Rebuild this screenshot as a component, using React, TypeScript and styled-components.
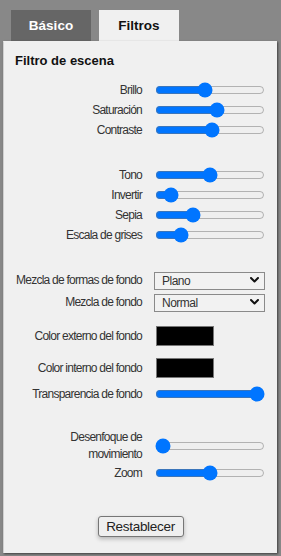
import React from "react";
import styled, { createGlobalStyle } from "styled-components";

const GlobalStyle = createGlobalStyle`
  html, body {
    margin: 0;
    padding: 0;
    background: #888888;
  }
  body {
    font-family: "Liberation Sans", Arial, sans-serif;
  }
`;

type SliderRow = { label: string; value: number };

const luzRows: SliderRow[] = [
  { label: "Brillo", value: 45 },
  { label: "Saturación", value: 57 },
  { label: "Contraste", value: 52 },
];

const tonoRows: SliderRow[] = [
  { label: "Tono", value: 50 },
  { label: "Invertir", value: 9 },
  { label: "Sepia", value: 32 },
  { label: "Escala de grises", value: 19 },
];

const Chevron = () => (
  <svg width="9" height="6" viewBox="0 0 9 6">
    <path
      d="M1 1 L4.5 4.5 L8 1"
      fill="none"
      stroke="#111"
      strokeWidth="2"
      strokeLinecap="round"
      strokeLinejoin="round"
    />
  </svg>
);

const App = () => {
  return (
    <>
      <GlobalStyle />
      <Page>
        <Tabs>
          <Tab>Básico</Tab>
          <Tab $active>Filtros</Tab>
        </Tabs>
        <Panel>
          <Title>Filtro de escena</Title>

          <Group $top={11}>
            {luzRows.map((row) => (
              <Row key={row.label}>
                <Label>{row.label}</Label>
                <Range type="range" defaultValue={row.value} />
              </Row>
            ))}
          </Group>

          <Group $top={25}>
            {tonoRows.map((row) => (
              <Row key={row.label}>
                <Label>{row.label}</Label>
                <Range type="range" defaultValue={row.value} />
              </Row>
            ))}
          </Group>

          <Group $top={24}>
            <Row $height={22}>
              <Label>Mezcla de formas de fondo</Label>
              <SelectWrap>
                <Select defaultValue="plano">
                  <option value="plano">Plano</option>
                </Select>
                <Chevron />
              </SelectWrap>
            </Row>
            <Row $height={22}>
              <Label>Mezcla de fondo</Label>
              <SelectWrap>
                <Select defaultValue="normal">
                  <option value="normal">Normal</option>
                </Select>
                <Chevron />
              </SelectWrap>
            </Row>
          </Group>

          <Group $top={7}>
            <Row $height={32}>
              <Label>Color externo del fondo</Label>
              <Swatch />
            </Row>
            <Row $height={32}>
              <Label>Color interno del fondo</Label>
              <Swatch />
            </Row>
            <Row>
              <Label>Transparencia de fondo</Label>
              <Range type="range" defaultValue={100} />
            </Row>
          </Group>

          <Group $top={24}>
            <Row $height={35}>
              <Label>
                Desenfoque de
                <br />
                movimiento
              </Label>
              <Range type="range" defaultValue={0} />
            </Row>
            <Row>
              <Label>Zoom</Label>
              <Range type="range" defaultValue={50} />
            </Row>
          </Group>

          <Footer>
            <ResetButton>Restablecer</ResetButton>
          </Footer>
        </Panel>
      </Page>
    </>
  );
};

export default App;

const Page = styled.div`
  padding: 10px 4px 3px 3px;
  height: 556px;
  box-sizing: border-box;
  display: flex;
  flex-direction: column;
`;

const Tabs = styled.div`
  display: flex;
  gap: 8px;
  padding-left: 8px;
`;

const Tab = styled.div<{ $active?: boolean }>`
  width: 80px;
  height: 31px;
  display: flex;
  align-items: center;
  justify-content: center;
  font-size: 13.5px;
  font-weight: bold;
  color: ${(p) => (p.$active ? "#111" : "#fff")};
  background: ${(p) => (p.$active ? "#f0f0f0" : "#666666")};
`;

const Panel = styled.div`
  flex: 1;
  background: #f0f0f0;
  border-left: 1px solid #d0d0d0;
  border-top: 1px solid #f0f0f0;
  box-shadow: 1px 1px 2px rgba(0, 0, 0, 0.55);
  display: flex;
  flex-direction: column;
`;

const Title = styled.h1`
  margin: 0;
  padding: 11px 0 0 11px;
  font-size: 13px;
  font-weight: bold;
  color: #111;
  line-height: 16px;
`;

const Group = styled.div<{ $top: number }>`
  margin-top: ${(p) => p.$top}px;
  display: flex;
  flex-direction: column;
`;

const Row = styled.div<{ $height?: number }>`
  display: flex;
  align-items: center;
  gap: 13px;
  height: ${(p) => p.$height ?? 20}px;
`;

const Label = styled.div`
  width: 138px;
  flex-shrink: 0;
  text-align: right;
  white-space: nowrap;
  font-size: 12px;
  letter-spacing: -0.75px;
  line-height: 17px;
  color: #333;
`;

const Range = styled.input`
  width: 110px;
  margin: 0;
`;

const SelectWrap = styled.div`
  position: relative;
  width: 111px;
  height: 18px;
  margin-left: -1px;

  svg {
    position: absolute;
    right: 6px;
    top: 6px;
    pointer-events: none;
  }
`;

const Select = styled.select`
  appearance: none;
  width: 100%;
  height: 100%;
  margin: 0;
  padding: 0 0 0 7px;
  border: 1px solid #8a8a8a;
  border-radius: 0;
  background: #f2f2f2;
  font-family: "Liberation Sans", Arial, sans-serif;
  font-size: 12px;
  font-weight: normal;
  letter-spacing: -0.5px;
  color: #333;
`;

const Swatch = styled.div`
  width: 56px;
  height: 18px;
  margin-left: 1px;
  background: #000;
  border: 1px solid #777;
`;

const Footer = styled.div`
  display: flex;
  justify-content: center;
  margin-top: 33px;
`;

const ResetButton = styled.button`
  width: 86px;
  height: 21px;
  padding: 0;
  font-family: "Liberation Sans", Arial, sans-serif;
  font-size: 13.5px;
  letter-spacing: -0.3px;
  color: #222;
  background: #efefef;
  border: 1px solid #767676;
  border-radius: 3px;
  box-shadow: 0 2px 4px rgba(0, 0, 0, 0.25);
`;
